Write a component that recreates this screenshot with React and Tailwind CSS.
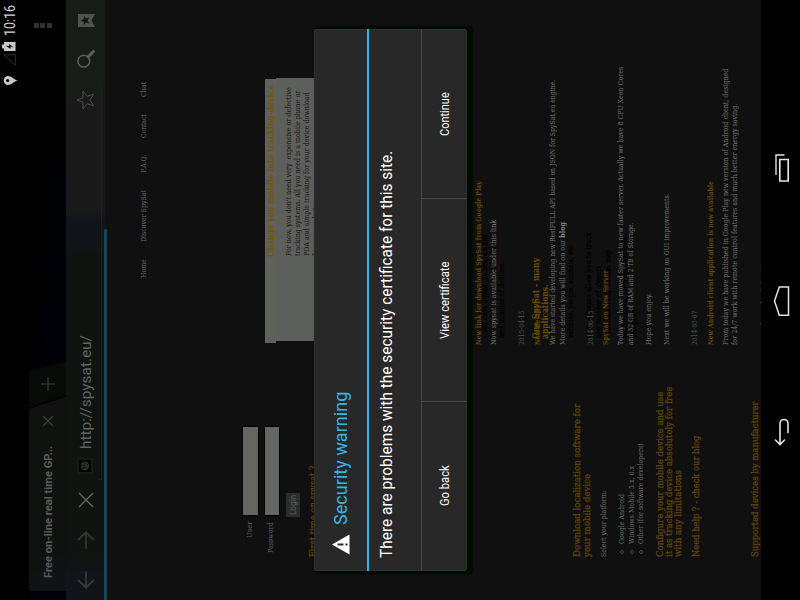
import { useLayoutEffect, useRef } from 'react';

// Condenses or widens a single line of text so that it spans an exact width.
function Fit({ w, className = '', children }) {
  const ref = useRef(null);
  useLayoutEffect(() => {
    const el = ref.current;
    el.style.transform = `scaleX(${w / el.offsetWidth})`;
  }, [w]);
  return (
    <span className={'block shrink-0 ' + className} style={{ width: w }}>
      <span ref={ref} className="block w-max origin-left whitespace-pre">
        {children}
      </span>
    </span>
  );
}

const serif = "font-['DejaVu_Serif_Condensed','DejaVu_Serif',serif] ";

function Line({ h, w, className = '', children }) {
  return (
    <div className={'flex shrink-0 items-end leading-[10px] ' + h}>
      <Fit w={w} className={className}>{children}</Fit>
    </div>
  );
}

const gold = 'text-[9.5px] text-[#644508] [-webkit-text-stroke:0.25px_#644508]';
const goldBold = 'text-[8px] font-bold text-[#654606]';
const body = 'text-[8px] text-[#747673]';
const dim = 'text-[8px] text-[#4e504d]';
const dark = 'text-[8px] text-[#131512]';

function StatusBar() {
  return (
    <div className="flex h-[29px] shrink-0 items-start justify-end bg-black pr-[5px] font-[Roboto,sans-serif]">
      <svg className="mt-[3px] mr-[9px]" width="11" height="15" viewBox="0 0 11 15">
        <path d="M5.5 14.5C4 10.500 1 8 1 5a4.500 4.300 0 0 1 9 0C10 8 7 10.500 5.500 14.500Z" fill="#c9c9c9" />
        <circle cx="5.500" cy="4.700" r="1.600" fill="#000" />
      </svg>
      <svg className="mt-[3px] mr-[3px]" width="12" height="13" viewBox="0 0 12 13">
        <path d="M.7 12.300H11.300V.7Z" fill="none" stroke="#303030" />
      </svg>
      <svg className="mt-[2px] mr-[6px]" width="9" height="14" viewBox="0 0 9 14">
        <path d="M0 2H2.500V0H6.500V2H9V13.500H0Z" fill="#c9c9c9" />
        <path d="M5.500 3.500 2 8.500H4.500L3.500 12 7 7H4.700Z" fill="#000" />
      </svg>
      <Fit w={31} className="mt-[2px] text-[14px] leading-[16px] text-[#d4d4d4]">10:16</Fit>
    </div>
  );
}

function TabStrip() {
  return (
    <div className="relative flex h-[37px] shrink-0 items-center">
      <svg className="absolute inset-0" width="600" height="37" viewBox="0 0 600 37">
        <defs>
          <linearGradient id="glow" x1="0" x2="1" y1="0" y2="0">
            <stop offset="0" stopColor="#01010a" />
            <stop offset=".65" stopColor="#000106" />
            <stop offset=".78" stopColor="#000" />
          </linearGradient>
        </defs>
        <path d="M0 0H600V37H0Z" fill="url(#glow)" />
        <path d="M20 0H600V30C500 22 400 18 238 14Z" fill="#000" />
        <path d="M9 0H192L204 37H9Z" fill="#0f120f" />
        <path d="M9 0H26L50 37H9Z" fill="#101216" />
        <path d="M193 0H229L238 37H205Z" fill="#070b07" />
        <path d="M192 0 204 37" stroke="#000" strokeWidth="1.500" />
      </svg>
      <div className="relative flex w-full items-center pl-[22px] font-[Roboto,sans-serif]">
        <Fit w={132} className="mt-[1px] text-[11px] font-bold leading-[13px] text-[#5a5c5a]">Free on-line real time GP...</Fit>
        <svg className="ml-[19px]" width="12" height="12" viewBox="0 0 12 12">
          <path d="M1 1 11 11M11 1 1 11" stroke="#3d3f3d" strokeWidth="1.100" />
        </svg>
        <svg className="ml-[24px]" width="14" height="14" viewBox="0 0 14 14">
          <path d="M7 0V14M0 7H14" stroke="#303230" strokeWidth="1.400" />
        </svg>
        <div className="ml-auto mr-[23px] flex -translate-y-[5px] flex-col gap-[1.500px]">
          <i className="block size-[5px] bg-[#323232]" />
          <i className="block size-[5px] bg-[#323232]" />
          <i className="block size-[5px] bg-[#323232]" />
        </div>
      </div>
    </div>
  );
}

function Toolbar() {
  return (
    <div className="relative flex h-[39px] shrink-0 items-center bg-[linear-gradient(to_right,#111419_0px,#111419_25px,#101410_45px,#101410_345px,#11151a_356px,#11151a_380px,#191919_390px,#191919_495px,#181c19_505px)] pl-[11px] pr-[14px] font-[Roboto,sans-serif]">
      <svg width="18" height="18" viewBox="0 0 18 18" fill="none" stroke="#353735" strokeWidth="1.900">
        <path d="M17.500 9H1.500M9 1 1.200 9 9 17" />
      </svg>
      <svg className="ml-[22px]" width="18" height="18" viewBox="0 0 18 18" fill="none" stroke="#303230" strokeWidth="1.900">
        <path d="M.5 9H16.500M9 1 16.800 9 9 17" />
      </svg>
      <svg className="ml-[23px]" width="16" height="16" viewBox="0 0 16 16">
        <path d="M1 1 15 15M15 1 1 15" stroke="#666866" strokeWidth="1.400" />
      </svg>
      <div className="ml-[18px] flex size-[16px] -translate-y-[1px] items-center justify-center border-[2px] border-[#151c12] bg-black">
        <svg width="10" height="10" viewBox="0 0 10 10">
          <circle cx="5" cy="5" r="4.200" fill="#353735" />
          <path d="M2 3 4 4 3 7M6 1 5 4 8 5M5 7 7 8" stroke="#080808" fill="none" />
        </svg>
      </div>
      <Fit w={114} className="ml-[9px] text-[15.500px] leading-[18px] text-[#626462]">http://spysat.eu/</Fit>
      <svg className="ml-auto" width="20" height="19" viewBox="0 0 20 19">
        <path d="M10 1 12.300 7H18.800L13.700 11 15.600 17.600 10 13.700 4.400 17.600 6.300 11 1.200 7H7.700Z" fill="none" stroke="#4e504e" strokeWidth="1" />
      </svg>
      <svg className="ml-[22px]" width="19" height="18" viewBox="0 0 19 18">
        <circle cx="6.800" cy="6.800" r="5.900" fill="none" stroke="#5a5d5a" strokeWidth="1.500" />
        <path d="M11.500 11.500 16.500 16.300" stroke="#5a5d5a" strokeWidth="3.200" strokeLinecap="round" />
      </svg>
      <svg className="ml-[22px] mt-[1px]" width="13" height="17" viewBox="0 0 13 17">
        <path d="M0 0H13V17L6.500 13.500 0 17Z" fill="#50534f" />
        <path d="M6.500 2.500 7.800 5.800H11.300L8.500 8 9.500 11.500 6.500 9.500 3.500 11.500 4.500 8 1.700 5.800H5.200Z" fill="#111511" />
      </svg>
      <div className="absolute bottom-[3px] left-[120px] h-[3px] w-[400px] border-x border-b border-[#1d221d]" />
      <div className="absolute -bottom-[2px] left-0 z-10 h-[3px] w-[371px] bg-[#11485a]" />
    </div>
  );
}

function LeftColumn() {
  return (
    <div className={'flex w-[255px] shrink-0 flex-col pl-[43px] pt-[82px] ' + serif}>
      <div className="flex h-[17px] items-center">
        <div className="flex w-[41px] justify-end pb-[2px] pr-[6px]">
          <Fit w={16} className="text-[8px] leading-[10px] text-[#5f615e]">User</Fit>
        </div>
        <div className="h-[17px] w-[90px] border border-black bg-[#646661]" />
      </div>
      <div className="mt-[5px] flex h-[16px] items-center">
        <div className="flex w-[41px] justify-end pb-[3px] pr-[6px]">
          <Fit w={31} className="text-[8px] leading-[10px] text-[#5f615e]">Password</Fit>
        </div>
        <div className="h-[16px] w-[90px] border border-black bg-[#646661]" />
      </div>
      <div className="ml-[40px] mt-[6px] flex h-[14px] w-[24px] shrink-0 items-center justify-center bg-[#2b2c2b] font-[Roboto,sans-serif]">
        <Fit w={20} className="text-[8.500px] leading-[10px] text-[#5c5e5b]">Login</Fit>
      </div>
      <Line h="h-[18px]" w={92} className={gold}>First time on spysat ?</Line>
      <Line h="h-[264px]" w={153} className={gold}>Download localization software for</Line>
      <Line h="h-[10px]" w={83} className={gold}>your mobile device</Line>
      <Line h="h-[17px]" w={67} className={body}>Select your platform:</Line>
      <div className="flex flex-col pl-[3px]">
        {[
          ['h-[18px]', 50, 'Google Android'],
          ['h-[10px]', 78, 'Windows Mobile 5.x, 6.x'],
          ['h-[9px]', 101, 'Other (for software developers)'],
        ].map(([h, w, t]) => (
          <div key={t} className="flex items-end gap-[6px]">
            <i className="mb-[3px] block size-[4px] rounded-full border border-[#444]" />
            <Line h={h} w={w} className="text-[8px] text-[#6c6e6b]">{t}</Line>
          </div>
        ))}
      </div>
      <Line h="h-[19px]" w={165} className={gold}>Configure your mobile device and use</Line>
      <Line h="h-[9px]" w={170} className={gold}>it as tracking device absolutely for free</Line>
      <Line h="h-[9px]" w={87} className={gold}>with any limitations</Line>
      <Line h="h-[18px]" w={121} className={gold}>Need help ? - check our blog</Line>
      <Line h="h-[59px]" w={156} className={gold}>Supported devices by manufacturer</Line>
    </div>
  );
}

// Dark paragraph text hidden beneath the news feed.
function Ghost({ className, w, children }) {
  return (
    <div className={'absolute left-[7px] flex leading-[10px] ' + className}>
      <Fit w={w} className="text-[8px] text-[#000] [-webkit-text-stroke:0.2px_#000]">{children}</Fit>
    </div>
  );
}

function RightColumn() {
  return (
    <div className={'flex flex-col pt-[105px] ' + serif}>
      <div className="ml-[2px] flex h-[11px] w-[264px] items-end bg-[#5f615d] pl-[86px] leading-[10px]">
        <Fit w={172} className="text-[9.500px] font-bold text-[#765503]">Change you mobile into tracking-device</Fit>
      </div>
      <div className="ml-[4px] flex h-[80px] w-[263px] shrink-0 flex-col bg-[#5d5f5c] pl-[85px]">
        <Line h="h-[18px]" w={169} className={dark}>For now, you don't need very  expensive or defective</Line>
        <Line h="h-[9px]" w={165} className={dark}>tracking systems. All you need is a mobile phone or</Line>
        <Line h="h-[9px]" w={164} className={dark}>PDA and simple tracking for your device download</Line>
        <Line h="h-[9px]" w={52} className={dark}>from our website</Line>
      </div>
      <div className="relative mt-[108px] flex flex-col">
        <Ghost className="top-[16px]" w={104}>- 365 days a year, 24 hours a day</Ghost>
        <Ghost className="top-[33px]" w={76}>and number of devices.</Ghost>
        <Ghost className="top-[102px]" w={94}>vehicles, people, animals, etc.</Ghost>
        <Ghost className="top-[120px]" w={106}>Our software allow you to track</Ghost>
        <Ghost className="top-[130px]" w={72}>any number of objects</Ghost>
        <Ghost className="top-[139px]" w={89}>simultaneously on one map</Ghost>
        <Ghost className="top-[156px]" w={104}>with mobile GPS and internet</Ghost>
        <Ghost className="top-[165px]" w={32}>reception.</Ghost>
        <div className="absolute left-[6px] top-[67px] flex flex-col leading-[9px]">
          <Fit w={81} className="text-[9.500px] font-bold text-[#6c4b06]">One SpySat - many</Fit>
          <Fit w={55} className="text-[9.500px] font-bold text-[#6c4b06]">applications.</Fit>
        </div>
        <div className="relative flex flex-col">
          <Line h="h-[19px]" w={164} className={goldBold}>New link for download SpySat from Google Play</Line>
          <Line h="h-[16px]" w={125} className={body}>Now spysat is available under this <b className="font-normal text-[#858785]">link</b></Line>
          <Line h="h-[28px]" w={34} className={dim}>2015-04-15</Line>
          <Line h="h-[15px]" w={44} className={goldBold}>New RestAPI</Line>
          <Line h="h-[16px]" w={265} className={body}>We have started developing new RestFULL API based on JSON for SpySat.eu engine.</Line>
          <Line h="h-[10px]" w={123} className={body}>More details you will find on our <b className="text-[#858785]">blog</b></Line>
          <Line h="h-[28px]" w={34} className={dim}>2014-06-15</Line>
          <Line h="h-[14px]" w={75} className={goldBold}>SpySat on New Server</Line>
          <Line h="h-[16px]" w={278} className={body}>Today we have moved SpySat to new faster server. Actually we have 8 CPU Xeon Cores</Line>
          <Line h="h-[10px]" w={123} className={body}>and 32 GB of RAM and 2 TB of Storage.</Line>
          <Line h="h-[18px]" w={52} className={body}>Hope you enjoy.</Line>
          <Line h="h-[18px]" w={152} className={body}>Next we will be working on GUI improvements.</Line>
          <Line h="h-[28px]" w={34} className={dim}>2014-03-07</Line>
          <Line h="h-[15px]" w={164} className={goldBold}>New Android client application is now available</Line>
          <Line h="h-[16px]" w={276} className={body}>From today we have published in Google Play new version of Android client, designed</Line>
          <Line h="h-[9px]" w={241} className={body}>for 24/7 work with remote control features and much better energy saving.</Line>
          <Line h="h-[29px]" w={88} className={body}>Control in Android client Lite</Line>
        </div>
      </div>
    </div>
  );
}

function NavBar() {
  return (
    <div className="flex h-[39px] shrink-0 items-start bg-black pl-[153px] pt-[12px]">
      <svg width="30" height="18" viewBox="0 0 30 18" fill="none" stroke="#e4e4e4" strokeWidth="1.600" strokeLinecap="round">
        <path d="M3 7H23.500A4 4 0 0 1 23.500 15H14.500M7 2.500 2.500 7 7 11.500" />
      </svg>
      <svg className="ml-[100px]" width="32" height="18" viewBox="0 0 32 18" fill="none" stroke="#e4e4e4" strokeWidth="1.500">
        <path d="M1.700 15.500V6.300L16 1.500 30 6.300V15.500Z" />
      </svg>
      <svg className="ml-[102px]" width="30" height="18" viewBox="0 0 30 18" fill="none" stroke="#e4e4e4">
        <path d="M2 6.800H23.500V15.200H2Z" strokeWidth="1.700" />
        <path d="M8 3H28V11.500" strokeWidth="1.400" />
      </svg>
    </div>
  );
}

function Dialog() {
  const btn = 'flex items-center justify-center pt-[2px] text-[12px] leading-[14px] text-[#fafafa]';
  return (
    <div className="absolute left-[29px] top-[314px] flex h-[153px] w-[542px] flex-col rounded-[2px] border border-[#2e302e] bg-[#282828] font-[Roboto,sans-serif] shadow-[0_3px_1px_3px_rgba(0,10,0,0.88)]">
      <div className="flex h-[52px] shrink-0 items-center pl-[15px]">
        <svg width="21" height="18" viewBox="0 0 21 18">
          <path d="M10.500 0 20.500 17.500H.5Z" fill="#fff" />
          <path d="M10.500 5.500V11.500M10.500 13.500V15.500" stroke="#282828" strokeWidth="2" />
        </svg>
        <Fit w={133} className="ml-[9px] text-[18.500px] leading-[22px] text-[#33b5e5]">Security warning</Fit>
      </div>
      <div className="-mx-px h-[2px] shrink-0 bg-[#33b5e5]" />
      <div className="flex h-[52px] shrink-0 items-start pl-[12px] pt-[8px]">
        <Fit w={407} className="text-[16.500px] leading-[20px] text-white">There are problems with the security certificate for this site.</Fit>
      </div>
      <div className="flex flex-1 border-t border-[#474747]">
        <div className={btn + ' w-[169px] border-r border-[#474747]'}><Fit w={41}>Go back</Fit></div>
        <div className={btn + ' w-[203px] border-r border-[#474747]'}><Fit w={78}>View certificate</Fit></div>
        <div className={btn + ' flex-1'}><Fit w={44}>Continue</Fit></div>
      </div>
    </div>
  );
}

export default function App() {
  return (
    <div className="h-[600px] w-[800px] overflow-hidden bg-black">
      <div className="relative flex h-[800px] w-[600px] origin-top-left translate-y-[600px] -rotate-90 flex-col">
        <StatusBar />
        <TabStrip />
        <Toolbar />
        <div className="flex h-[656px] shrink-0 flex-col overflow-hidden bg-[#101010]">
          <div className={'flex h-[55px] shrink-0 items-start gap-[17px] pl-[322px] pt-[34px] text-[8px] leading-[10px] text-[#666865] ' + serif}>
            <Fit w={19}>Home</Fit>
            <Fit w={52}>Discover SpySat</Fit>
            <Fit w={18}>F.A.Q.</Fit>
            <Fit w={24}>Contact</Fit>
            <Fit w={15}>Chat</Fit>
          </div>
          <div className="flex">
            <LeftColumn />
            <RightColumn />
          </div>
        </div>
        <NavBar />
        <Dialog />
      </div>
    </div>
  );
}
